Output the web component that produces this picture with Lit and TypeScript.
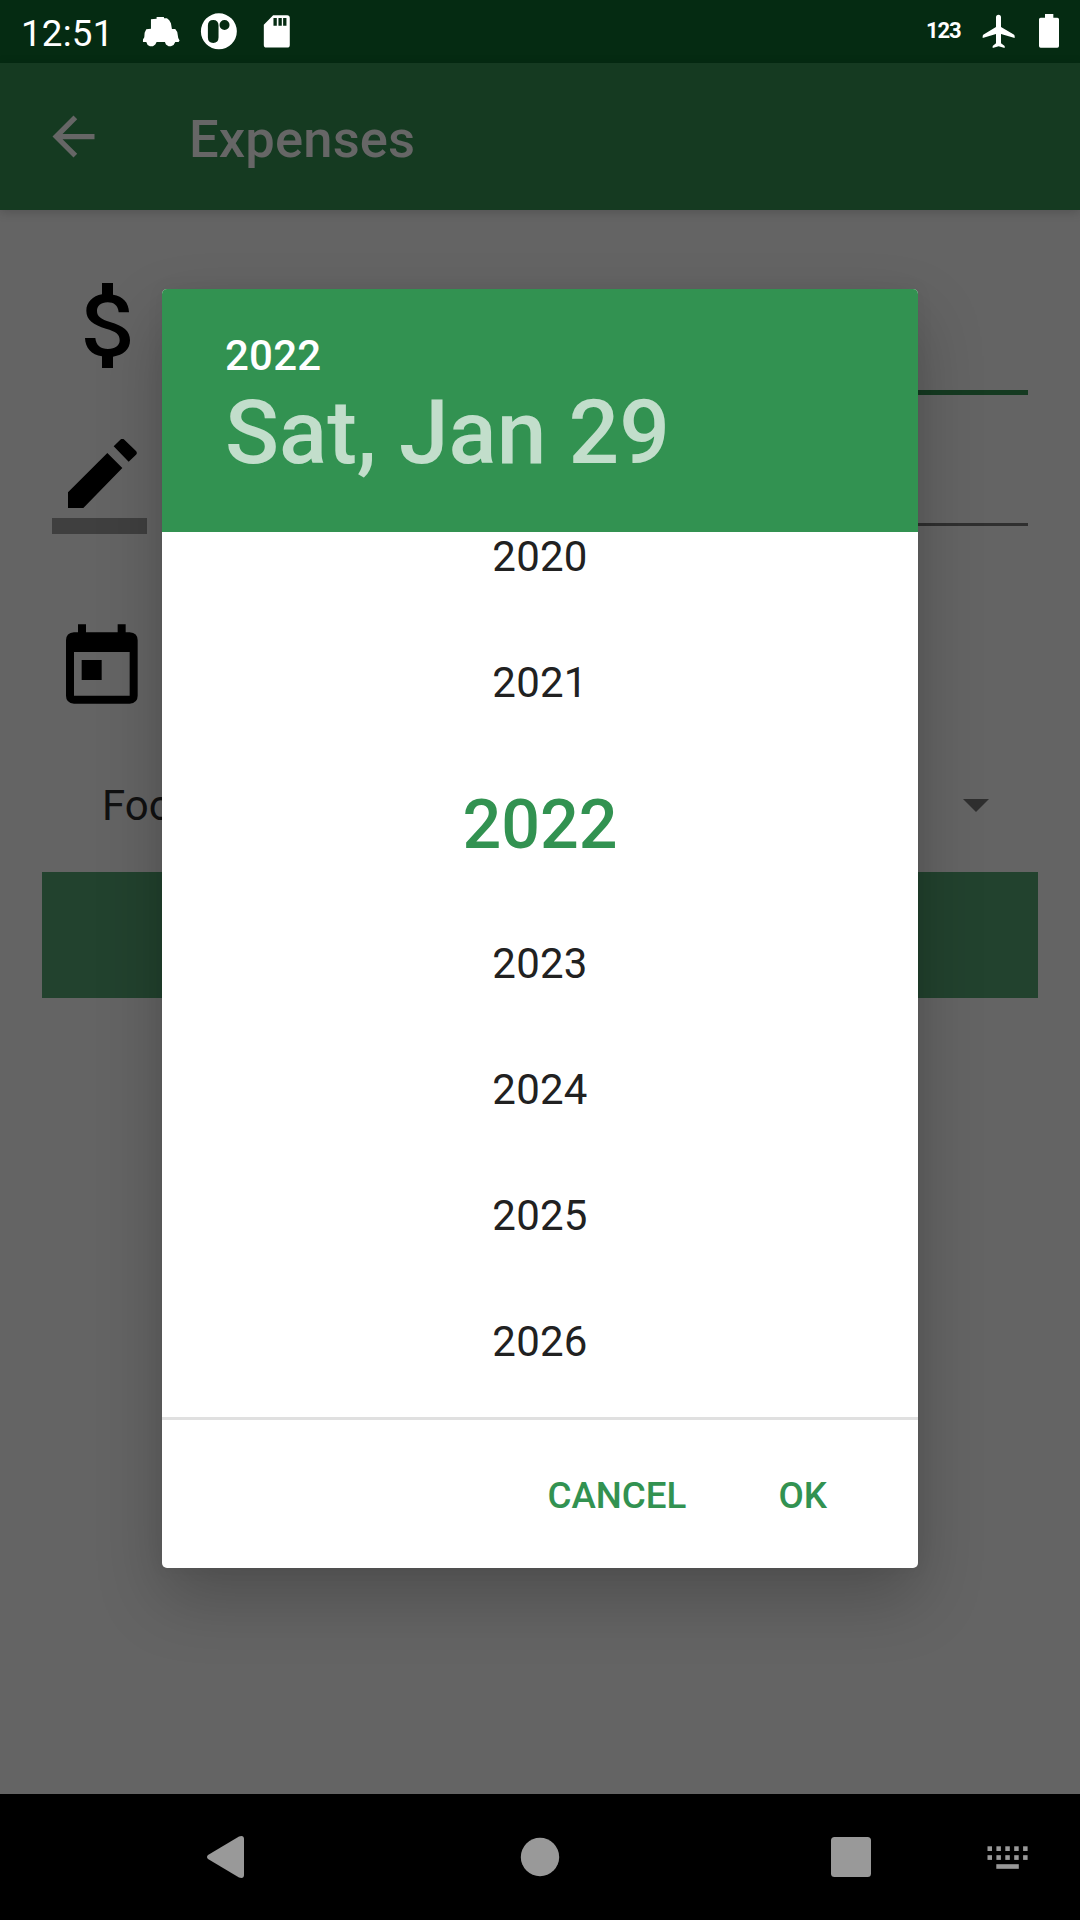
import { LitElement, html, css, svg } from "lit";
import { customElement, property } from "lit/decorators.js";
import { classMap } from "lit/directives/class-map.js";

@customElement("status-bar")
class StatusBar extends LitElement {
  static styles = css`
    :host {
      display: flex;
      align-items: center;
      height: 63px;
      background: #052b12;
      color: #fff;
    }
    .time {
      margin-left: 21px;
      width: 92px;
      font-size: 36.75px;
      line-height: 43px;
      letter-spacing: 0.2px;
      padding-top: 3px;
    }
    .left {
      flex: 1;
      height: 63px;
    }
    .ime {
      width: 42px;
      font-size: 22px;
      font-weight: 700;
      line-height: 26px;
      letter-spacing: -1.1px;
      padding-bottom: 2px;
    }
    svg {
      display: block;
    }
  `;
  render() {
    return html`
      <div class="time">12:51</div>
      <svg class="left" viewBox="339 0 2442 189" preserveAspectRatio="xMinYMin meet" fill="#fff">
        <path d="M470 51H492V55H501L508 61L513 70L516 87H526L532 96L535 114L539 122L536 126H526L521 135L513 139H506L498 134L495 126H470L466 134L459 139H450L443 135L439 126H429V119L433 112L434 98L439 88L453 86V58L470 56Z" />
        <path fill-rule="evenodd" d="M657 40A54 54 0 1 1 657 148A54 54 0 1 1 657 40ZM640 60Q624 60 624 77V112Q624 129 640 129Q656 129 656 112V77Q656 60 640 60ZM674 60A15 15 0 1 0 674 90A15 15 0 1 0 674 60Z" />
        <path fill-rule="evenodd" d="M820 46H862Q870 46 870 54V135Q870 143 862 143H800Q792 143 792 135V74ZM821 54V77H831V54ZM836 54V77H846V54ZM850 54V77H860V54Z" />
      </svg>
      <div class="ime">123</div>
      <svg width="112" height="63" viewBox="264 0 336 189" fill="#fff">
        <path d="M348 52Q348 44 355.500 44Q363 44 363 52V81L400 103Q404 105 404 109V114L363 102V130L374 138V144L356 139L338 144V138L348 130V102L308 114V109Q308 105 312 103L348 81Z" />
        <path d="M495 42H520V53H532Q537 53 537 58V138Q537 143 532 143H482Q477 143 477 138V58Q477 53 482 53H495Z" />
      </svg>
    `;
  }
}

@customElement("expense-form")
class ExpenseForm extends LitElement {
  static styles = css`
    :host {
      display: flex;
      flex-direction: column;
      flex: 1;
    }
    .bar {
      display: flex;
      align-items: center;
      height: 147px;
      background: #153a21;
      color: #666;
      box-shadow: 0 2px 10px rgba(0, 0, 0, 0.18);
    }
    .back {
      margin-left: 42px;
      width: 147px;
    }
    .title {
      font-size: 52.5px;
      font-weight: 500;
      line-height: 62px;
      letter-spacing: 0.15px;
      padding-top: 4px;
    }
    .row {
      display: flex;
      align-items: flex-start;
      padding-right: 52px;
      box-sizing: border-box;
    }
    .amount {
      height: 185px;
      padding-left: 85px;
    }
    .amount svg {
      margin-top: 73px;
    }
    .note {
      height: 139px;
      padding-left: 52px;
    }
    .tool {
      display: flex;
      flex-direction: column;
      width: 95px;
      padding-top: 44px;
    }
    .tool svg {
      margin-left: 16px;
    }
    .underbar {
      height: 16px;
      margin-top: 10px;
      background: #3f3f3f;
    }
    .field {
      flex: 1;
      margin-left: 40px;
      box-sizing: border-box;
    }
    .focused {
      height: 185px;
      border-bottom: 5px solid #153a21;
    }
    .idle {
      height: 131px;
      border-bottom: 3px solid #2f2f2f;
    }
    .date {
      height: 206px;
      padding: 90px 0 0 66px;
    }
    .spinner {
      height: 132px;
      align-items: center;
      justify-content: space-between;
      padding: 0 91px 1px 102px;
      font-size: 42px;
      color: #111;
    }
    .save {
      height: 126px;
      margin: 0 42px;
      background: #22422e;
    }
    svg {
      display: block;
    }
  `;
  render() {
    return html`
      <div class="bar">
        <div class="back">
          <svg width="63" height="63" viewBox="0 0 24 24" fill="#666">
            <path d="M20 11H7.830l5.590-5.590L12 4l-8 8 8 8 1.410-1.410L7.830 13H20v-2z" />
          </svg>
        </div>
        <div class="title">Expenses</div>
      </div>
      <div class="row amount">
        <svg width="46" height="85" viewBox="165 69 138 255">
          <path d="M216 69H249V104C279 109 296 127 297 157H266C264 136 252 127 233 127C212 127 201 138 201 153C201 170 214 178 240 186C280 198 300 212 300 241C300 268 280 286 249 290V324H216V289C184 284 166 264 165 234H196C198 256 212 267 234 267C256 267 269 257 269 241C269 222 258 215 228 206C190 194 169 180 169 152C169 127 188 108 216 103Z" />
        </svg>
        <div class="field focused"></div>
      </div>
      <div class="row note">
        <div class="tool">
          <svg width="69" height="69" viewBox="114 537 207 207">
            <path d="M114 697L232 579L277 624L160 744H114ZM251 559L271 539Q277 534 283 539L318 573Q323 579 318 584L296 605Z" />
          </svg>
          <div class="underbar"></div>
        </div>
        <div class="field idle"></div>
      </div>
      <div class="row date">
        <svg width="72" height="80" viewBox="109 71 216 240">
          <path fill-rule="evenodd" d="M145 72H169V96H264V72H288V96H300Q324 98 324 120V286Q324 308 300 310H133Q109 308 109 286V120Q109 98 133 96H145ZM133 155V286H300V155ZM156 179H216V239H156Z" />
        </svg>
      </div>
      <div class="row spinner">
        <span>Food</span>
        <svg width="26" height="13" viewBox="0 0 26 13"><path fill="#2f2f2f" d="M0 0H26L13 13Z" /></svg>
      </div>
      <div class="save"></div>
    `;
  }
}

@customElement("year-picker")
class YearPicker extends LitElement {
  @property({ type: Number }) selected = 2022;
  static styles = css`
    :host {
      display: flex;
      flex-direction: column;
      background: #fff;
      border-radius: 5px;
      overflow: hidden;
    }
    .head {
      height: 243px;
      box-sizing: border-box;
      padding: 42px 63px 0;
      background: #329251;
      color: #fff;
      font-weight: 500;
    }
    .year {
      font-size: 42px;
      line-height: 49px;
      letter-spacing: 0.2px;
    }
    .day {
      font-size: 89.25px;
      line-height: 105px;
      color: rgba(255, 255, 255, 0.7);
    }
    .list {
      display: flex;
      flex-direction: column;
      justify-content: flex-end;
      height: 888px;
      box-sizing: border-box;
      padding-bottom: 12px;
      overflow: hidden;
      border-bottom: 3px solid #e0e0e0;
    }
    .item {
      flex: none;
      box-sizing: border-box;
      height: 126px;
      line-height: 126px;
      font-size: 42px;
      letter-spacing: 0.25px;
      text-align: center;
      color: #212121;
    }
    .current {
      height: 155px;
      line-height: 152px;
      padding-top: 3px;
      font-size: 68.25px;
      font-weight: 500;
      letter-spacing: 0;
      color: #329251;
    }
    .actions {
      display: flex;
      justify-content: flex-end;
      gap: 92px;
      padding: 54px 91px 0 0;
      flex: 1;
      font-size: 36.75px;
      font-weight: 500;
      line-height: 44px;
      color: #329251;
    }
  `;
  render() {
    const years = [2020, 2021, 2022, 2023, 2024, 2025, 2026];
    return html`
      <div class="head">
        <div class="year">${this.selected}</div>
        <div class="day">Sat, Jan 29</div>
      </div>
      <div class="list">
        ${years.map(
          (y) => html`<div class=${classMap({ item: true, current: y === this.selected })}>${y}</div>`
        )}
      </div>
      <div class="actions"><span>CANCEL</span><span>OK</span></div>
    `;
  }
}

@customElement("nav-bar")
class NavBar extends LitElement {
  static styles = css`
    :host {
      display: block;
      height: 126px;
      background: #000;
    }
    svg {
      display: block;
    }
  `;
  render() {
    const keys = [0, 1].flatMap((r) =>
      [0, 1, 2, 3, 4].map(
        (c) => svg`<rect x=${987.5 + c * 8.9} y=${52.3 + r * 8.9} width="4.500" height="4.700" />`
      )
    );
    return html`
      <svg width="1080" height="126" viewBox="0 0 1080 126" fill="#999">
        <path d="M208 61L239 42.500Q244 41 244 45V81Q244 85 239 83.500L208 65Q206 63 208 61Z" />
        <circle cx="540" cy="63" r="19.200" />
        <rect x="831" y="43" width="40" height="40" rx="3.500" />
        ${keys}
        <rect x="996.300" y="70.200" width="22.500" height="4.600" />
      </svg>
    `;
  }
}

@customElement("app-root")
class AppRoot extends LitElement {
  static styles = css`
    :host {
      display: flex;
      flex-direction: column;
      position: relative;
      width: 1080px;
      height: 1920px;
      overflow: hidden;
      background: #646464;
      font-family: Roboto, "Liberation Sans", sans-serif;
    }
    .dialog {
      position: absolute;
      left: 162px;
      top: 289px;
      width: 756px;
      height: 1279px;
      box-shadow: 0 30px 66px rgba(0, 0, 0, 0.22), 0 0 18px rgba(0, 0, 0, 0.05);
    }
  `;
  render() {
    return html`
      <status-bar></status-bar>
      <expense-form></expense-form>
      <nav-bar></nav-bar>
      <year-picker class="dialog" .selected=${2022}></year-picker>
    `;
  }
}
